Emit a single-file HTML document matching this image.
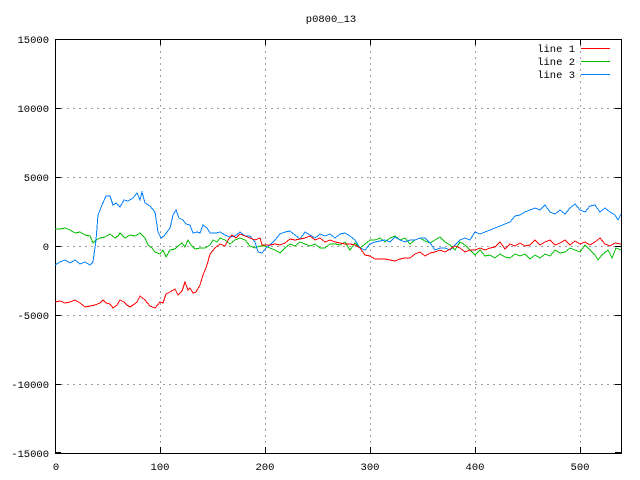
<!DOCTYPE html>
<html><head><style>body{margin:0;background:#fff}svg{display:block}text{font-family:"Liberation Mono","DejaVu Sans Mono",monospace;font-size:10.5px;fill:#000}</style></head><body>
<svg width="640" height="480" viewBox="0 0 640 480">
<g stroke="#a0a0a0" stroke-width="1" stroke-dasharray="2,4">
<path d="M160.5 39V453M265.5 39V453M370.5 39V453M475.5 39V453M580.5 39V453"/>
<path d="M55 108.5H621M55 177.5H621M55 246.5H621M55 315.5H621M55 384.5H621"/>
</g>
<g stroke="#000" stroke-width="1">
<path d="M55 39.5h6M55 108.5h6M55 177.5h6M55 246.5h6M55 315.5h6M55 384.5h6M55 452.5h6M621 39.5h-6M621 108.5h-6M621 177.5h-6M621 246.5h-6M621 315.5h-6M621 384.5h-6M621 452.5h-6"/>
<path d="M55.5 453v-6M160.5 453v-6M265.5 453v-6M370.5 453v-6M475.5 453v-6M580.5 453v-6M160.5 39v6M265.5 39v6M370.5 39v6M475.5 39v6M580.5 39v6"/>
</g>
<rect x="55.5" y="39.5" width="566" height="414" fill="none" stroke="#000"/>
<g text-anchor="end">
<text x="49" y="43">15000</text><text x="49" y="112">10000</text><text x="49" y="181">5000</text><text x="49" y="250">0</text><text x="49" y="319">-5000</text><text x="49" y="388">-10000</text><text x="49" y="457">-15000</text>
</g>
<g text-anchor="middle">
<text x="56" y="470">0</text><text x="160" y="470">100</text><text x="265" y="470">200</text><text x="370" y="470">300</text><text x="475" y="470">400</text><text x="580" y="470">500</text>
<text x="331" y="22">p0800_13</text>
</g>
<g text-anchor="end"><text x="575" y="52">line 1</text><text x="575" y="65">line 2</text><text x="575" y="78">line 3</text></g>
<path d="M581 48.5h29" stroke="#ff0000"/><path d="M581 61.5h29" stroke="#00c000"/><path d="M581 74.5h29" stroke="#0080ff"/>
<g fill="none" stroke-width="1" shape-rendering="crispEdges">
<polyline stroke="#00c000" points="55,229 60,229 65,228 70,230 75,233 80,232 85,235 90,236 93,243 96,240 100,238 105,237 110,234 115,238 118,236 120,233 125,238 130,235 135,236 140,233 145,238 148,245 152,248 155,252 160,254 163,250 166,257 170,250 175,249 178,246 182,243 185,247 188,240 191,245 195,249 200,248 205,248 210,245 213,240 217,242 220,238 225,240 230,244 235,240 240,238 245,240 250,246 255,248 260,246 265,246 270,248 275,250 280,253 285,248 290,244 295,246 300,242 305,244 310,246 315,244 320,248 325,248 330,244 335,244 340,245 345,242 350,250 355,243 360,248 365,244 370,240 375,240 380,238 385,242 390,238 395,236 400,240 405,238 410,244 415,240 420,238 425,241 430,243 435,240 440,237 445,242 450,245 455,250 460,242 465,245 470,250 475,255 480,250 485,256 490,255 495,258 500,254 505,257 510,258 515,254 520,256 525,254 530,259 535,255 540,258 545,254 550,256 555,250 560,253 565,252 570,248 575,250 580,252 585,245 590,250 595,255 598,260 602,255 608,250 612,258 616,248 621,250"/>
<polyline stroke="#0080ff" points="55,265 60,262 65,260 70,263 75,260 80,264 85,262 90,265 93,262 96,240 98,215 102,205 106,196 110,196 113,205 116,203 120,207 124,200 128,201 133,198 137,193 140,200 142,192 145,203 150,206 155,212 158,232 161,238 164,236 167,232 170,228 173,215 176,210 179,218 183,220 186,224 190,225 193,233 197,232 200,233 203,225 207,228 210,233 213,233 216,233 220,232 225,235 230,237 235,236 240,232 245,236 250,236 255,242 258,252 262,253 266,248 270,245 275,240 280,234 285,232 290,231 295,235 300,239 305,232 310,235 315,238 320,234 325,236 330,234 335,238 340,234 345,233 350,236 355,240 360,248 365,250 370,244 375,242 380,241 385,240 390,242 395,237 400,240 405,242 410,240 415,240 420,238 425,238 430,243 435,250 440,248 445,248 450,250 455,245 460,240 465,238 470,240 475,232 480,234 485,232 490,230 495,228 500,226 505,224 510,222 515,216 520,215 525,212 530,210 535,208 540,210 545,205 550,212 555,214 560,210 565,214 570,208 575,204 580,210 585,212 590,206 595,205 600,212 605,208 610,212 615,215 618,220 621,214"/>
<polyline stroke="#ff0000" points="55,302 60,301 65,303 70,302 75,300 80,303 85,307 90,306 95,305 100,303 103,300 106,303 110,304 113,308 117,305 120,300 124,302 127,305 130,307 133,305 137,302 140,296 145,300 150,306 155,308 160,302 163,303 166,294 170,292 175,289 178,295 182,291 185,282 188,290 190,288 193,293 196,292 200,285 203,275 207,265 210,254 215,248 220,244 225,246 228,240 232,235 236,238 240,234 245,236 250,238 255,240 260,238 262,245 265,245 270,245 275,244 280,245 285,243 290,239 295,240 300,239 305,238 310,236 315,240 320,238 325,242 330,240 335,242 340,243 345,244 350,244 355,245 360,248 365,255 370,256 375,259 380,259 385,259 390,260 395,261 400,259 405,258 410,258 415,254 420,252 425,256 430,253 435,252 440,250 445,252 450,249 455,246 460,248 465,252 470,250 475,250 480,248 485,250 490,248 495,247 500,242 505,249 510,244 515,246 520,243 525,246 530,245 535,240 540,245 545,242 550,240 555,245 560,243 565,240 570,245 575,241 580,244 585,242 590,245 595,242 600,238 605,244 610,246 615,243 621,244"/>
</g>
</svg>
</body></html>
